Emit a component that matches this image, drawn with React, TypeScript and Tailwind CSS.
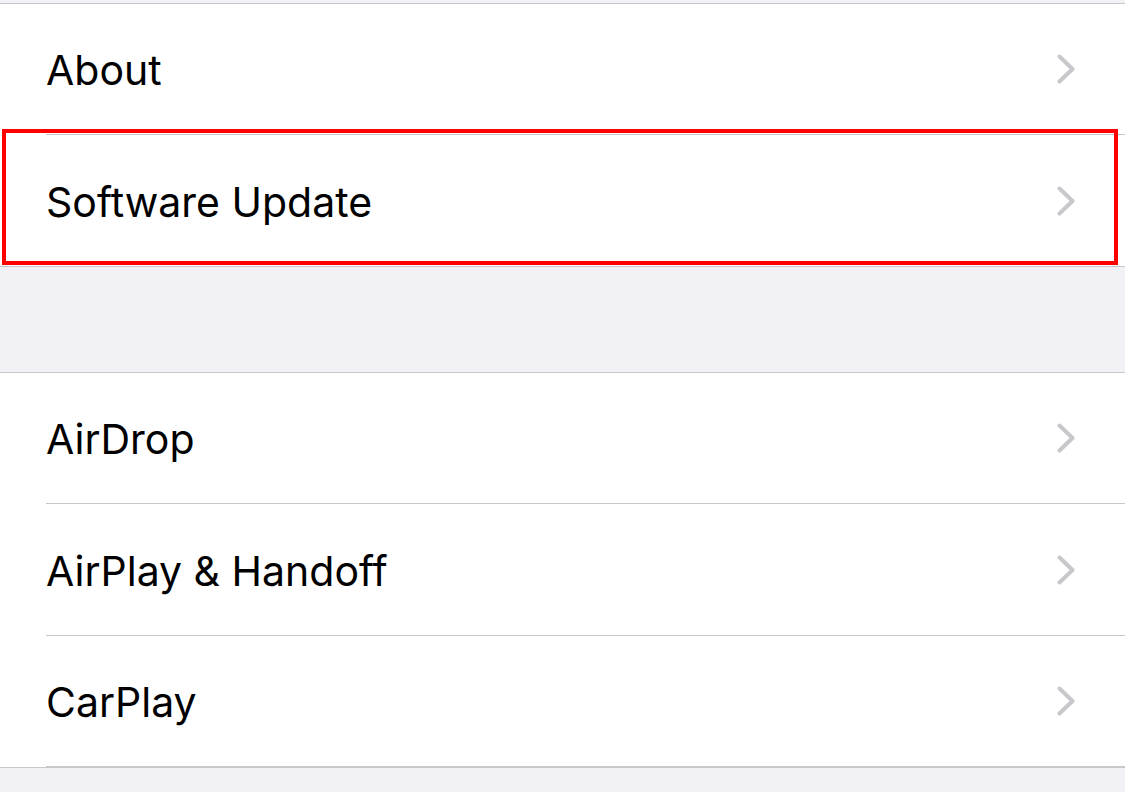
import React from "react";

function Chevron() {
  return (
    <svg width="18" height="30" viewBox="0 0 18 30" fill="none">
      <polyline
        points="2.5,2.5 15.5,15 2.5,27.5"
        stroke="#c7c7cc"
        strokeWidth="4"
        strokeLinecap="round"
        strokeLinejoin="round"
      />
    </svg>
  );
}

function Row({ label, last, tall }: { label: string; last?: boolean; tall?: boolean }) {
  return (
    <div className="pl-[46px]">
      <div
        className={
          "flex items-center justify-between pr-[50px] " +
          (tall ? "h-[132px] " : "h-[131px] ") +
          (last ? "" : "border-b border-[#c8c7cc]")
        }
      >
        <span className="mt-[4px] text-[41px] text-black">{label}</span>
        <Chevron />
      </div>
    </div>
  );
}

export default function App() {
  return (
    <div
      className="h-[792px] w-[1125px] overflow-hidden bg-[#f1f1f6]"
      style={{ fontFamily: "Inter, 'Noto Sans', sans-serif" }}
    >
      <div className="h-[3px]" />

      <div className="relative border-y border-[#c8c7cc] bg-white">
        <Row label="About" />
        <Row label="Software Update" last />
        <div className="pointer-events-none absolute left-[2px] top-[125px] h-[136px] w-[1116px] border-4 border-[#ff0000]" />
      </div>

      <div className="h-[105px]" />

      <div className="border-y border-[#c8c7cc] bg-white">
        <Row label="AirDrop" />
        <Row label="AirPlay & Handoff" tall />
        <Row label="CarPlay" />
      </div>
    </div>
  );
}
